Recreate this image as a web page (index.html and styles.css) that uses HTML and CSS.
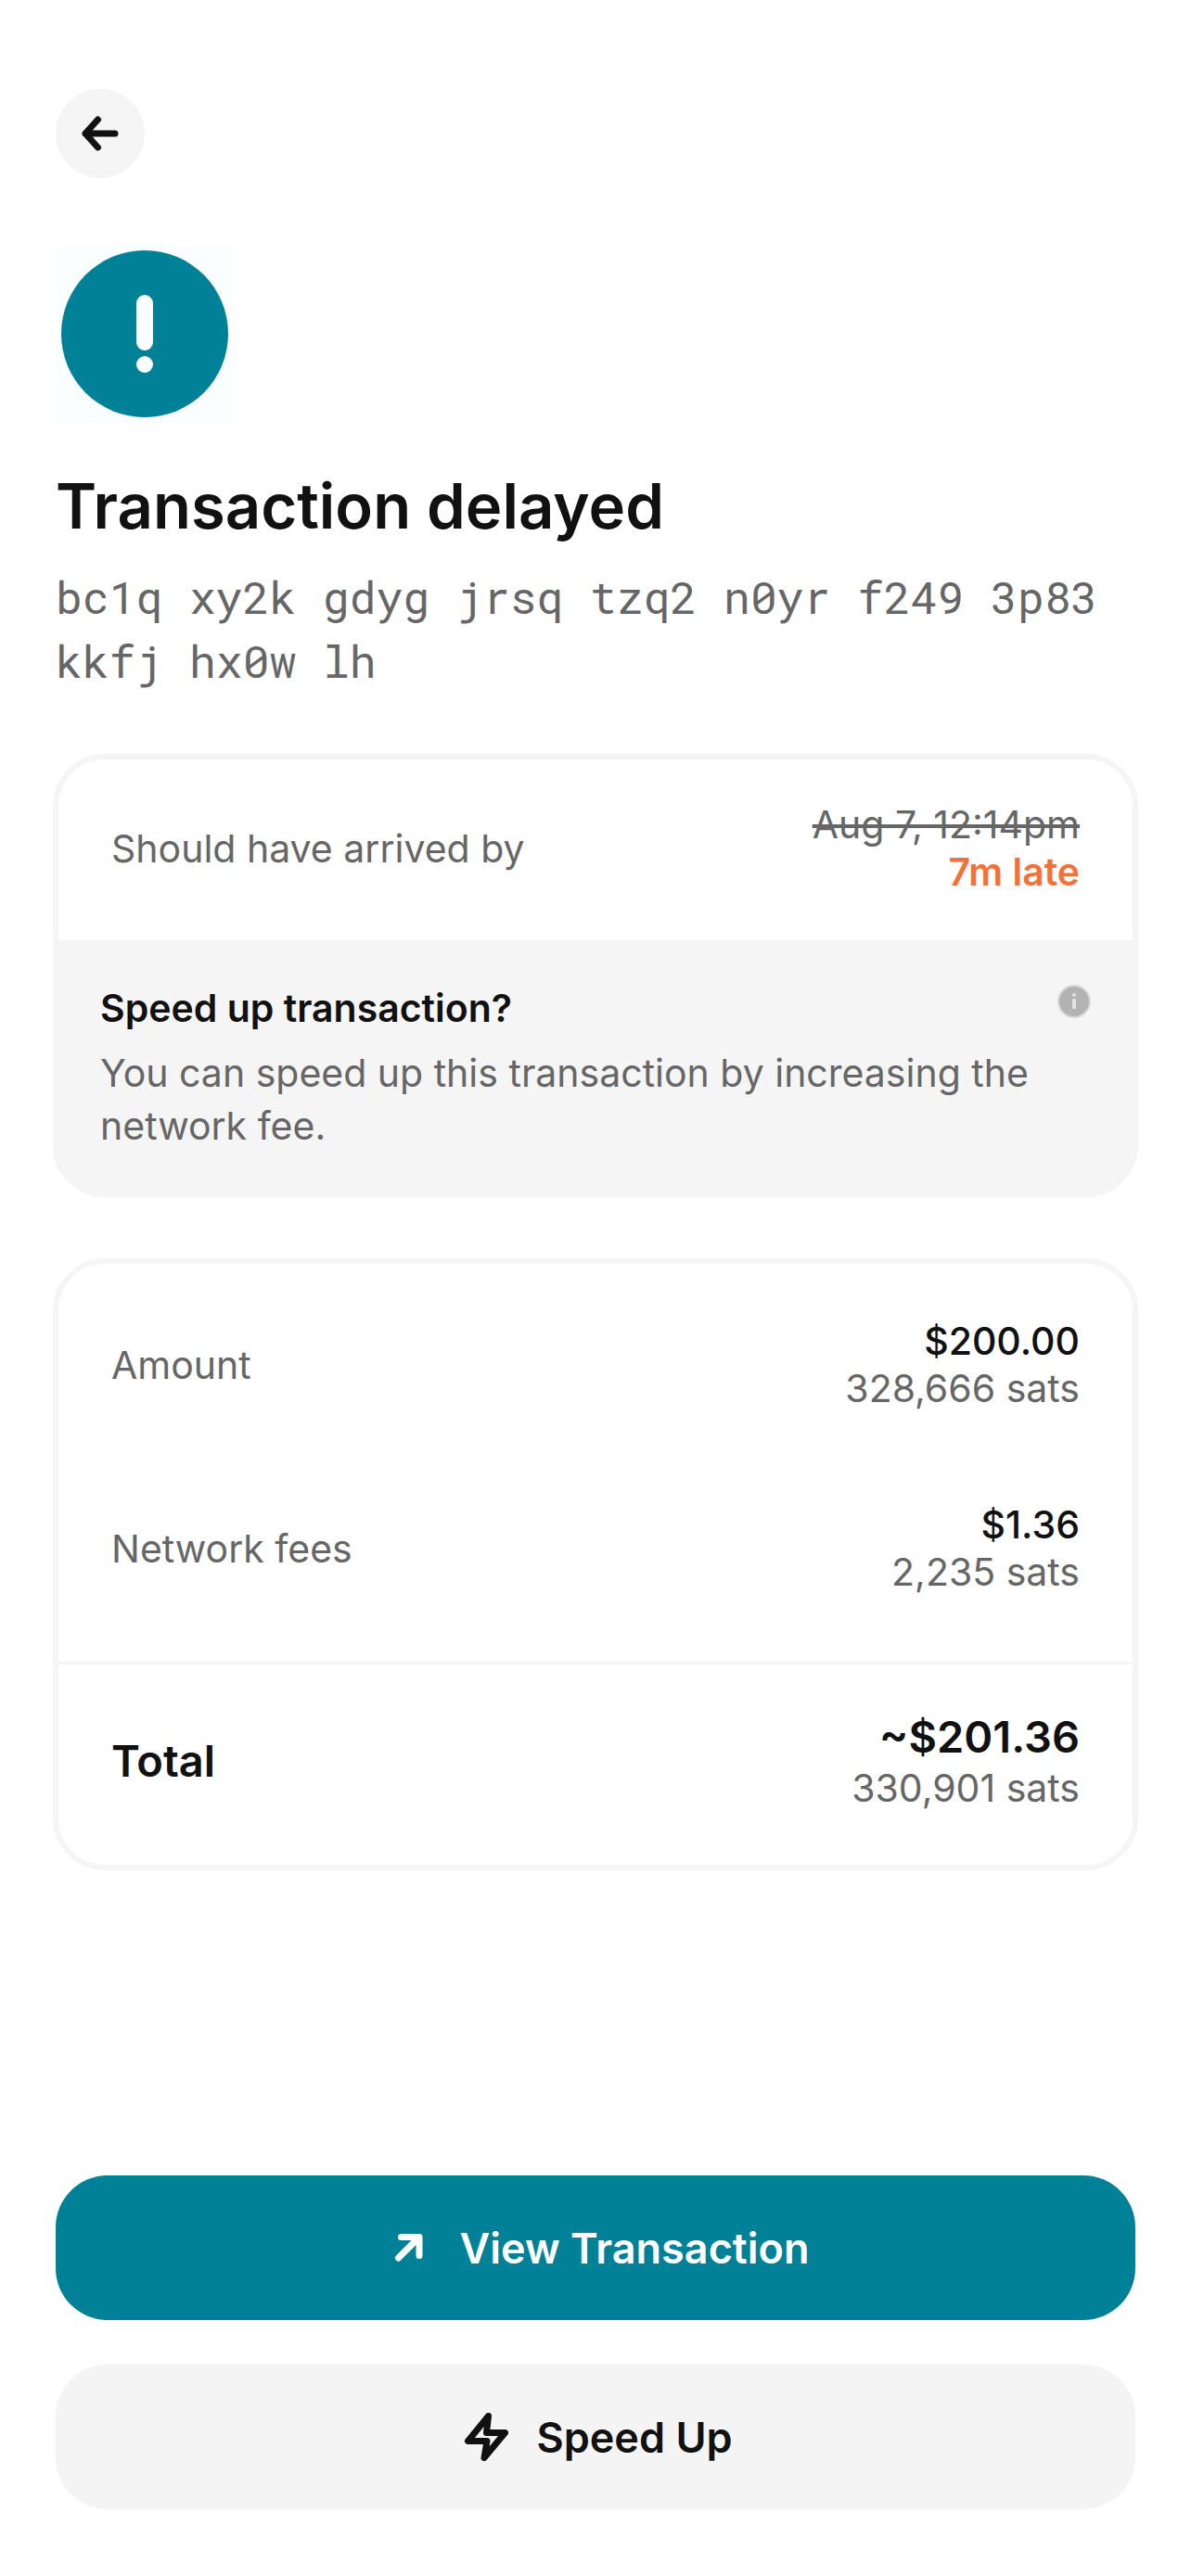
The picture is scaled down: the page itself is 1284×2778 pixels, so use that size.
FILE: index.html
```html
<!DOCTYPE html>
<html lang="en">
<head>
  <meta charset="utf-8">
  <meta name="viewport" content="width=device-width, initial-scale=1">
  <title>Transaction delayed</title>
  <link rel="stylesheet" href="styles.css">
</head>
<body>
  <main class="screen">
    <header class="top">
      <button class="back" type="button" aria-label="Back">
        <svg class="back-icon" viewBox="0 0 48 48" aria-hidden="true">
          <path d="M40 24H8M21.5 9L8 24l13.5 15"/>
        </svg>
      </button>
    </header>

    <svg class="status-icon" viewBox="0 0 192 192" aria-hidden="true">
      <rect class="status-back" width="192" height="192"/>
      <circle class="status-disc" cx="96" cy="96" r="90"/>
      <rect class="status-back" x="87" y="54" width="18" height="60" rx="9"/>
      <circle class="status-back" cx="96" cy="129" r="9"/>
    </svg>

    <h1 class="title">Transaction delayed</h1>
    <p class="address">bc1q xy2k gdyg jrsq tzq2 n0yr f249 3p83 kkfj hx0w lh</p>

    <section class="card">
      <dl class="row">
        <dt class="label">Should have arrived by</dt>
        <dd class="values">
          <s class="muted">Aug 7, 12:14pm</s>
          <strong class="late">7m late</strong>
        </dd>
      </dl>
      <div class="notice">
        <div class="notice-head">
          <h2 class="notice-title">Speed up transaction?</h2>
          <button class="info" type="button" aria-label="About speeding up">
            <svg class="info-icon" viewBox="0 0 36 36" aria-hidden="true">
              <circle class="info-disc" cx="18" cy="18" r="17"/>
              <circle class="info-mark" cx="18" cy="11" r="2"/>
              <rect class="info-mark" x="16" y="15" width="4" height="11" rx="1"/>
            </svg>
          </button>
        </div>
        <p class="notice-text">You can speed up this transaction by increasing the network fee.</p>
      </div>
    </section>

    <dl class="card">
      <div class="row amount">
        <dt class="label">Amount</dt>
        <dd class="values"><span class="fiat">$200.00</span><span class="muted">328,666 sats</span></dd>
      </div>
      <div class="row fees">
        <dt class="label">Network fees</dt>
        <dd class="values"><span class="fiat">$1.36</span><span class="muted">2,235 sats</span></dd>
      </div>
      <div class="row total">
        <dt class="total-label">Total</dt>
        <dd class="values"><span class="total-fiat">~$201.36</span><span class="muted">330,901 sats</span></dd>
      </div>
    </dl>

    <footer class="actions">
      <button class="action primary" type="button">
        <svg class="action-icon" viewBox="0 0 54 54" aria-hidden="true">
          <path d="M17.5 38L39.5 16M20.5 15.5H40V35.5"/>
        </svg>
        View Transaction
      </button>
      <button class="action secondary" type="button">
        <svg class="action-icon" viewBox="0 0 54 54" aria-hidden="true">
          <path d="M32.5 4.5L10.500 31.5H31L28 49.5L50.500 22.5H30.500z"/>
        </svg>
        Speed Up
      </button>
    </footer>
  </main>
</body>
</html>
```
FILE: styles.css
```css
:root {
  --ink: #111;
  --muted: #666;
  --line: #f5f5f5;
  --teal: #008197;
  --orange: #f77037;
}

* {
  box-sizing: border-box;
}

body {
  margin: 0;
  background: #fff;
  color: var(--ink);
  font-family: Inter, "Liberation Sans", sans-serif;
  font-size: 41px;
  line-height: 51px;
}

h1, h2, p, dl, dd {
  margin: 0;
}

button {
  border: 0;
  padding: 0;
  color: inherit;
  font: inherit;
  cursor: pointer;
}

svg {
  display: block;
}

.screen {
  display: flex;
  flex-direction: column;
  min-height: 100vh;
  padding: 96px 60px 72px;
}

.back {
  display: grid;
  place-items: center;
  width: 96px;
  height: 96px;
  border-radius: 50%;
  background: var(--line);
}

.back-icon {
  width: 48px;
  height: 48px;
  fill: none;
  stroke: var(--ink);
  stroke-width: 7;
  stroke-linecap: round;
  stroke-linejoin: round;
}

.status-icon {
  width: 192px;
  height: 192px;
  margin-top: 72px;
}

.status-back {
  fill: #fafeff;
}

.status-disc {
  fill: var(--teal);
}

.title {
  margin-top: 48px;
  font-size: 67px;
  font-weight: 600;
  line-height: 84px;
}

.address {
  margin-top: 21px;
  color: var(--muted);
  font-family: "Roboto Mono", "Liberation Mono", monospace;
  font-size: 48px;
  line-height: 69px;
}

.card {
  margin: 66px -3px 0;
  border: 6px solid var(--line);
  border-radius: 56px;
  overflow: hidden;
}

.row {
  display: flex;
  align-items: center;
  justify-content: space-between;
  padding: 45px 57px 48px;
}

.label,
.muted {
  color: var(--muted);
}

.values {
  display: flex;
  flex-direction: column;
  text-align: right;
}

.late {
  color: var(--orange);
  font-weight: 600;
}

.notice {
  padding: 48px 45px 42px;
  background: var(--line);
}

.notice-head {
  display: flex;
  justify-content: space-between;
  align-items: flex-start;
}

.notice-title {
  font-size: 41px;
  font-weight: 600;
  line-height: 51px;
}

.info {
  background: none;
}

.info-icon {
  width: 36px;
  height: 36px;
}

.info-disc {
  fill: #b3b3b3;
  stroke: #d9d9d9;
  stroke-width: 2;
}

.info-mark {
  fill: #e4e4e4;
}

.notice-text {
  margin-top: 16px;
  color: var(--muted);
  line-height: 57px;
}

.amount {
  padding-top: 58px;
}

.fees {
  padding-top: 48px;
  padding-bottom: 71px;
}

.total {
  padding-top: 48px;
  padding-bottom: 57px;
  border-top: 3px solid var(--line);
}

.fiat {
  font-weight: 500;
}

.total-label,
.total-fiat {
  font-size: 47px;
  font-weight: 600;
  line-height: 60px;
}

.actions {
  display: grid;
  gap: 48px;
  margin-top: auto;
}

.action {
  display: flex;
  align-items: center;
  justify-content: center;
  gap: 30px;
  height: 156px;
  border-radius: 56px;
  font-size: 45px;
  font-weight: 600;
}

.primary {
  background: var(--teal);
  color: #fff;
}

.secondary {
  background: #f4f4f4;
}

.action-icon {
  width: 54px;
  height: 54px;
  fill: none;
  stroke: currentColor;
  stroke-width: 7;
  stroke-linecap: round;
  stroke-linejoin: round;
}
```
